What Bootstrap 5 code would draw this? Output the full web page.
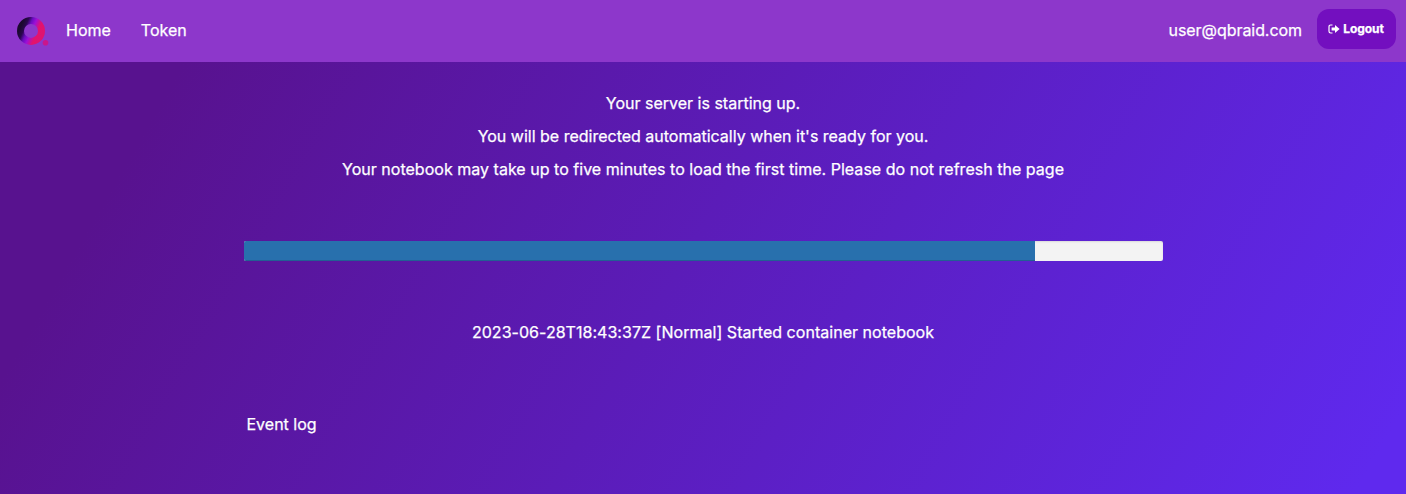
<!DOCTYPE html>
<html lang="en">
<head>
<meta charset="utf-8">
<meta name="viewport" content="width=device-width, initial-scale=1">
<title>Server starting</title>
<link rel="stylesheet" href="https://cdn.jsdelivr.net/npm/bootstrap@5.3.0/dist/css/bootstrap.min.css">
<style>
body{font-family:Inter,"Liberation Sans",sans-serif;font-size:16px;line-height:23px;color:#fff;-webkit-text-stroke:.25px #fff;min-height:100vh;background:linear-gradient(120deg,#58128f 13%,#5f29ee 97%)}
.topbar{height:62px;background:#8d37cb;padding:0 10px 0 16px}
.topbar .nav-link{color:#fff;padding:0;margin-bottom:2px}
.topbar .nav-token{margin-left:30px}
.user-email{margin:0 15px 2px auto;letter-spacing:-.06px}
.brand-mark{width:33px;height:33px;margin-right:17px}
.btn-logout,.btn-logout:hover{width:79px;height:40px;border:0;border-radius:12px;background:#730fbf;color:#fff;font-size:12px;font-weight:700;letter-spacing:-.05px;margin-top:-4px;padding:0 1px 0 0}
.btn-logout svg{margin-right:3px}
.startup{width:919px;padding-top:30px}
.startup p{margin-bottom:10px}
.long-note{letter-spacing:.022px}
.load-bar{height:20px;border-radius:2px;background:#f3f3f3;margin-top:60px;box-shadow:inset 0 1px 2px rgba(0,0,0,.1)}
.load-bar .progress-bar{background:#2870ad;box-shadow:inset 0 -1px 0 rgba(0,0,0,.15)}
.latest{margin-top:60px;letter-spacing:.03px}
.event-log{margin-top:69px;padding-left:3px}
</style>
</head>
<body class="d-flex flex-column">
<nav class="topbar d-flex align-items-center">
  <a href="#" class="brand-mark d-flex" aria-label="qBraid">
    <svg width="33" height="33" viewBox="0 0 33 33">
      <defs><linearGradient id="ring" x1="0" y1=".2" x2="1" y2=".65"><stop offset=".05" stop-color="#1b092f"/><stop offset=".22" stop-color="#2a0650"/><stop offset=".38" stop-color="#6a0cc0"/><stop offset=".55" stop-color="#9d10d8"/><stop offset=".8" stop-color="#e3126d"/><stop offset="1" stop-color="#df1470"/></linearGradient></defs>
      <circle cx="15" cy="15.9" r="10.5" fill="none" stroke="url(#ring)" stroke-width="7"/>
      <circle cx="29.5" cy="27.8" r="2.8" fill="#ca168c"/>
    </svg>
  </a>
  <a class="nav-link" href="#">Home</a>
  <a class="nav-link nav-token" href="#">Token</a>
  <span class="user-email">user@qbraid.com</span>
  <a href="#" class="btn btn-logout d-flex align-items-center justify-content-center">
    <svg width="12" height="10" viewBox="0 0 12 10"><path d="M4.5 1H2.7Q1 1 1 2.7V7.3Q1 9 2.7 9H4.5" fill="none" stroke="#fff" stroke-width="1.2"/><path d="M3.6 3.5H7V1L11.6 5 7 9V6.5H3.6Z" fill="#fff"/></svg>Logout
  </a>
</nav>
<main class="startup mx-auto">
  <div class="text-center">
    <p>Your server is starting up.</p>
    <p>You will be redirected automatically when it's ready for you.</p>
    <p class="long-note">Your notebook may take up to five minutes to load the first time. Please do not refresh the page</p>
  </div>
  <div class="progress load-bar" role="progressbar" aria-valuenow="86" aria-valuemin="0" aria-valuemax="100">
    <div class="progress-bar" style="width:86.1%"></div>
  </div>
  <p class="latest text-center">2023-06-28T18:43:37Z [Normal] Started container notebook</p>
  <div class="event-log">Event log</div>
</main>
<script src="https://cdn.jsdelivr.net/npm/bootstrap@5.3.0/dist/js/bootstrap.bundle.min.js"></script>
</body>
</html>
